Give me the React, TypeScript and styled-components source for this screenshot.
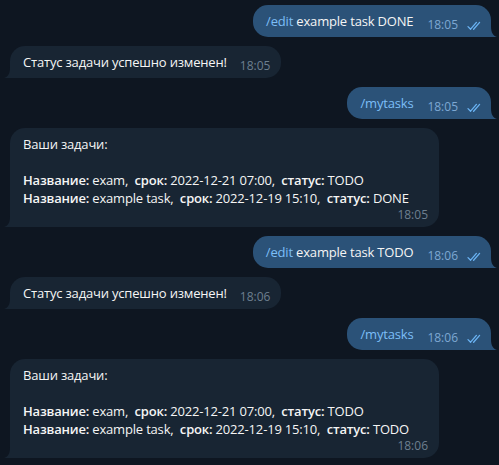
import React from "react";
import styled, { createGlobalStyle } from "styled-components";

const Global = createGlobalStyle`
  html, body { margin: 0; padding: 0; background: #0e1621; }
  body { font-family: "Open Sans", "Noto Sans", sans-serif; -webkit-font-smoothing: antialiased; }
`;

const Feed = styled.div`
  width: 499px;
  height: 465px;
  box-sizing: border-box;
  background: #0e1621;
  padding: 5px 8px 0 10px;
  display: flex;
  flex-direction: column;
  gap: 9px;
  overflow: hidden;
`;

const Row = styled.div<{ $out?: boolean }>`
  display: flex;
  justify-content: ${(p) => (p.$out ? "flex-end" : "flex-start")};
`;

const Bubble = styled.div<{ $out?: boolean; $width?: number }>`
  position: relative;
  box-sizing: border-box;
  ${(p) => (p.$width ? `width: ${p.$width}px;` : "")}
  background: ${(p) => (p.$out ? "#2b5278" : "#182533")};
  color: #f5f5f5;
  font-size: 13px;
  line-height: 18px;
  padding: 7px ${(p) => (p.$out ? "8px" : "11px")} 7px 13px;
  border-radius: ${(p) => (p.$out ? "15px 15px 0 15px" : "15px 15px 15px 0")};
`;

const Tail = styled.svg<{ $out?: boolean }>`
  position: absolute;
  bottom: 0;
  width: 6px;
  height: 11px;
  ${(p) => (p.$out ? "left: 100%;" : "right: 100%; transform: scaleX(-1);")}
`;

const Line = styled.div`
  display: flex;
  align-items: flex-end;
`;

const Text = styled.div`
  white-space: pre-wrap;
  letter-spacing: -0.18px;
`;

const Cmd = styled.span`
  color: #7cbef7;
`;

const Bold = styled.span`
  font-weight: 600;
`;

const Meta = styled.div<{ $out?: boolean }>`
  display: flex;
  align-items: center;
  gap: 9px;
  margin-left: ${(p) => (p.$out ? "14px" : "13px")};
  margin-bottom: -2px;
  font-size: 12px;
  line-height: 14px;
  color: ${(p) => (p.$out ? "#7da8d3" : "#6d7f8f")};
`;

const MetaRow = styled.div`
  display: flex;
  justify-content: flex-end;
  margin-top: 1px;
  margin-bottom: -2px;
  font-size: 12px;
  line-height: 14px;
  color: #6d7f8f;
`;

const Checks = styled.svg`
  width: 16px;
  height: 10px;
  margin-top: 2px;
`;

const TailShape = ({ out }: { out?: boolean }) => (
  <Tail $out={out} viewBox="0 0 6 11">
    <path d="M0 0 C0 7 2 9.6 6 11 L0 11 Z" fill={out ? "#2b5278" : "#182533"} />
  </Tail>
);

const DoubleCheck = () => (
  <Checks viewBox="0 0 16 10">
    <path
      d="M1 5.6 L3.6 8.2 L9.4 1.4 M6.6 8.2 L12.6 1.4"
      fill="none"
      stroke="#6ab3f3"
      strokeWidth="1.3"
      strokeLinecap="round"
      strokeLinejoin="round"
    />
  </Checks>
);

const Outgoing = ({ children, time }: { children: React.ReactNode; time: string }) => (
  <Row $out>
    <Bubble $out>
      <Line>
        <Text>{children}</Text>
        <Meta $out>
          {time}
          <DoubleCheck />
        </Meta>
      </Line>
      <TailShape out />
    </Bubble>
  </Row>
);

const Incoming = ({ children, time }: { children: React.ReactNode; time: string }) => (
  <Row>
    <Bubble>
      <Line>
        <Text>{children}</Text>
        <Meta>{time}</Meta>
      </Line>
      <TailShape />
    </Bubble>
  </Row>
);

type Task = { name: string; due: string; status: string };

const TaskList = ({ tasks, time }: { tasks: Task[]; time: string }) => (
  <Row>
    <Bubble $width={429}>
      <Text>
        {"Ваши задачи:\n\n"}
        {tasks.map((t, i) => (
          <React.Fragment key={i}>
            <Bold>Название:</Bold>
            {` ${t.name}, `}
            <Bold> срок:</Bold>
            {` ${t.due}, `}
            <Bold> статус:</Bold>
            {` ${t.status}`}
            {i < tasks.length - 1 ? "\n" : ""}
          </React.Fragment>
        ))}
      </Text>
      <MetaRow>{time}</MetaRow>
      <TailShape />
    </Bubble>
  </Row>
);

export default function App() {
  return (
    <>
      <Global />
      <Feed>
        <Outgoing time="18:05">
          <Cmd>/edit</Cmd> example task DONE
        </Outgoing>
        <Incoming time="18:05">Статус задачи успешно изменен!</Incoming>
        <Outgoing time="18:05">
          <Cmd>/mytasks</Cmd>
        </Outgoing>
        <TaskList
          time="18:05"
          tasks={[
            { name: "exam", due: "2022-12-21 07:00", status: "TODO" },
            { name: "example task", due: "2022-12-19 15:10", status: "DONE" },
          ]}
        />
        <Outgoing time="18:06">
          <Cmd>/edit</Cmd> example task TODO
        </Outgoing>
        <Incoming time="18:06">Статус задачи успешно изменен!</Incoming>
        <Outgoing time="18:06">
          <Cmd>/mytasks</Cmd>
        </Outgoing>
        <TaskList
          time="18:06"
          tasks={[
            { name: "exam", due: "2022-12-21 07:00", status: "TODO" },
            { name: "example task", due: "2022-12-19 15:10", status: "TODO" },
          ]}
        />
      </Feed>
    </>
  );
}
